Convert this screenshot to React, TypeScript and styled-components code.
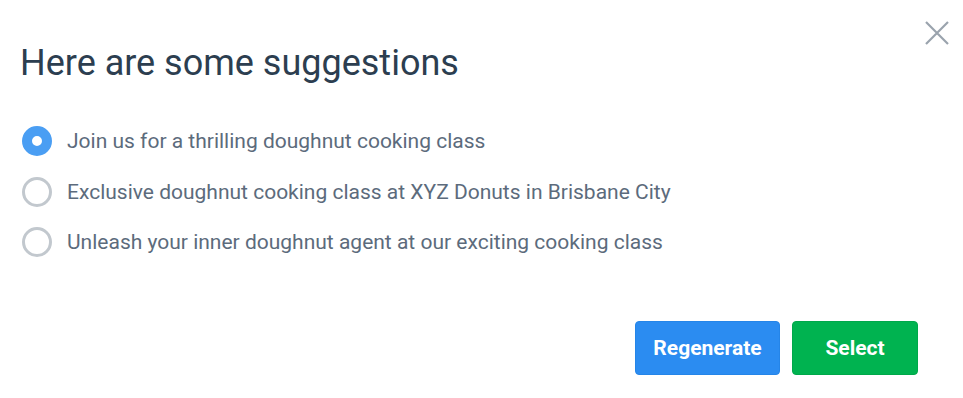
import React, { useState } from 'react';
import styled, { createGlobalStyle, css } from 'styled-components';

const GlobalStyle = createGlobalStyle`
  body {
    margin: 0;
    background: #ffffff;
    font-family: Roboto, "Liberation Sans", sans-serif;
  }
`;

const Dialog = styled.div`
  position: relative;
  width: 963px;
  height: 398px;
  box-sizing: border-box;
  padding: 41px 45px 0 20px;
  background: #ffffff;
  display: flex;
  flex-direction: column;
`;

const CloseButton = styled.button`
  position: absolute;
  top: 19px;
  right: 12px;
  width: 28px;
  height: 28px;
  padding: 0;
  border: none;
  background: transparent;
  cursor: pointer;
  display: flex;
  align-items: center;
  justify-content: center;
`;

const Title = styled.h2`
  margin: 0;
  font-size: 36px;
  line-height: 44px;
  font-weight: 400;
  color: #2c3e50;
`;

const OptionList = styled.div`
  margin-top: 41px;
  display: flex;
  flex-direction: column;
  gap: 20.5px;
`;

const OptionRow = styled.label`
  display: flex;
  align-items: center;
  gap: 15px;
  height: 30px;
  cursor: pointer;
`;

const Radio = styled.span<{ checked: boolean }>`
  box-sizing: border-box;
  width: 30px;
  height: 30px;
  margin-left: 2px;
  border-radius: 50%;
  flex-shrink: 0;
  background: #ffffff;
  ${({ checked }) =>
    checked
      ? css`
          border: 10px solid #4a9ef3;
        `
      : css`
          border: 3px solid #c2c8ce;
        `}
`;

const OptionText = styled.span`
  font-size: 21px;
  color: #5c6b7c;
`;

const Actions = styled.div`
  margin-top: auto;
  margin-bottom: 23px;
  display: flex;
  justify-content: flex-end;
  gap: 12px;
`;

const ActionButton = styled.button<{ variant: 'blue' | 'green' }>`
  height: 54px;
  border: 1px solid ${({ variant }) => (variant === 'blue' ? '#2585e8' : '#00a84a')};
  border-radius: 4px;
  font-family: Roboto, "Liberation Sans", sans-serif;
  font-size: 21px;
  font-weight: 700;
  color: #ffffff;
  cursor: pointer;
  background: ${({ variant }) => (variant === 'blue' ? '#2b8cf1' : '#00b350')};
  width: ${({ variant }) => (variant === 'blue' ? '145px' : '126px')};
`;

const options = [
  'Join us for a thrilling doughnut cooking class',
  'Exclusive doughnut cooking class at XYZ Donuts in Brisbane City',
  'Unleash your inner doughnut agent at our exciting cooking class'
];

export default function App() {
  const [selected, setSelected] = useState(0);

  return (
    <>
      <GlobalStyle />
      <Dialog>
        <CloseButton aria-label="Close">
          <svg width="24" height="24" viewBox="0 0 24 24">
            <path
              d="M1 1 L23 23 M23 1 L1 23"
              stroke="#9aa3ad"
              strokeWidth="2.2"
              fill="none"
            />
          </svg>
        </CloseButton>
        <Title>Here are some suggestions</Title>
        <OptionList>
          {options.map((text, i) => (
            <OptionRow key={text} onClick={() => setSelected(i)}>
              <Radio checked={selected === i} />
              <OptionText>{text}</OptionText>
            </OptionRow>
          ))}
        </OptionList>
        <Actions>
          <ActionButton variant="blue">Regenerate</ActionButton>
          <ActionButton variant="green">Select</ActionButton>
        </Actions>
      </Dialog>
    </>
  );
}
